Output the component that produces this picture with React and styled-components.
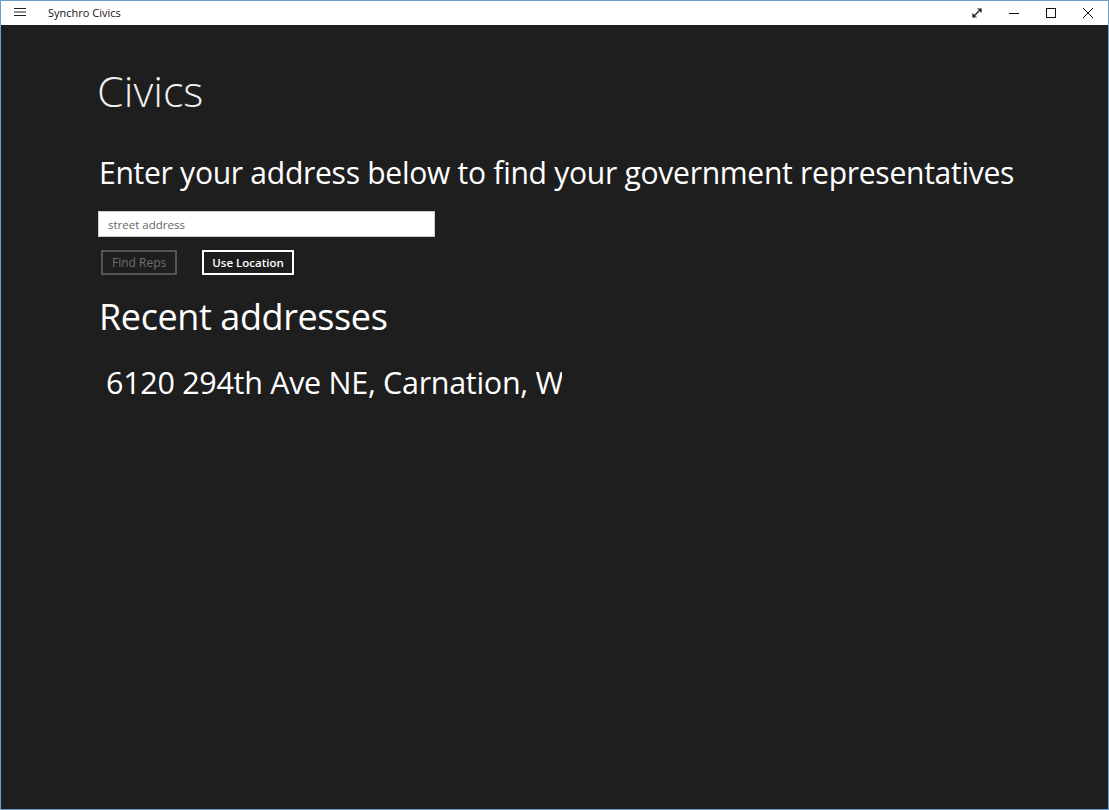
import styled, { createGlobalStyle } from 'styled-components';

const GlobalStyle = createGlobalStyle`
    html, body {
        margin: 0;
        padding: 0;
        height: 100%;
        background: #1e1e1e;
    }
    #root {
        height: 100%;
    }
`;

export default function App() {
    return (
        <Window>
            <GlobalStyle />
            <TitleBar>
                <TitleLeft>
                    <HamburgerIcon />
                    <span>Synchro Civics</span>
                </TitleLeft>
                <Controls>
                    <ControlButton>
                        <svg width="10" height="10" viewBox="0 0 10 10">
                            <path
                                d="M1 9 L9 1 M5.5 1 H9 V4.5 M1 5.5 V9 H4.5"
                                stroke="#111"
                                strokeWidth="1.2"
                                fill="none"
                            />
                        </svg>
                    </ControlButton>
                    <ControlButton>
                        <svg width="10" height="10" viewBox="0 0 10 10">
                            <path d="M0 5.5 H10" stroke="#111" strokeWidth="1" />
                        </svg>
                    </ControlButton>
                    <ControlButton>
                        <svg width="10" height="10" viewBox="0 0 10 10">
                            <rect
                                x="0.5"
                                y="0.5"
                                width="9"
                                height="9"
                                stroke="#111"
                                fill="none"
                            />
                        </svg>
                    </ControlButton>
                    <ControlButton>
                        <svg width="10" height="10" viewBox="0 0 10 10">
                            <path
                                d="M0 0 L10 10 M10 0 L0 10"
                                stroke="#111"
                                strokeWidth="1"
                            />
                        </svg>
                    </ControlButton>
                </Controls>
            </TitleBar>
            <Content>
                <PageTitle>Civics</PageTitle>
                <Prompt>
                    Enter your address below to find your government
                    representatives
                </Prompt>
                <AddressInput placeholder="street address" />
                <ButtonRow>
                    <ActionButton disabled>Find Reps</ActionButton>
                    <ActionButton>Use Location</ActionButton>
                </ButtonRow>
                <SectionTitle>Recent addresses</SectionTitle>
                <RecentList>
                    {recentAddresses.map((item) => (
                        <RecentItem key={item}>{item}</RecentItem>
                    ))}
                </RecentList>
            </Content>
        </Window>
    );
}

function HamburgerIcon() {
    return (
        <svg width="12" height="10" viewBox="0 0 12 10">
            <path d="M0 1.5 H12 M0 5 H12 M0 8.5 H12" stroke="#222" strokeWidth="1" />
        </svg>
    );
}

const recentAddresses = ['6120 294th Ave NE, Carnation, WA 98014'];

const Window = styled.div`
    box-sizing: border-box;
    height: 810px;
    width: 1109px;
    border: 1px solid #6d9fcb;
    display: flex;
    flex-direction: column;
    background: #1e1e1e;
    font-family: 'Open Sans', 'Noto Sans', sans-serif;
`;

const TitleBar = styled.div`
    height: 24px;
    flex: none;
    background: #ffffff;
    display: flex;
    align-items: center;
    justify-content: space-between;
    border-bottom: 1px solid #1e1e1e;
`;

const TitleLeft = styled.div`
    display: flex;
    align-items: center;
    font-size: 11px;
    color: #111;
    margin-top: -2px;
    svg {
        margin-left: 13px;
        margin-right: 22px;
    }
`;

const Controls = styled.div`
    display: flex;
    height: 100%;
    margin-right: 2px;
`;

const ControlButton = styled.div`
    width: 37px;
    height: 100%;
    display: flex;
    align-items: center;
    justify-content: center;
`;

const Content = styled.main`
    flex: 1;
    padding: 37px 0 0 96px;
    color: #ffffff;
    overflow: hidden;
`;

const PageTitle = styled.h1`
    margin: 0;
    font-size: 43px;
    font-weight: 300;
    line-height: 56px;
    color: #f0f0f0;
`;

const Prompt = styled.h2`
    margin: 34px 0 0 2px;
    font-size: 30.1px;
    font-weight: 400;
    line-height: 40px;
    letter-spacing: -0.3px;
`;

const AddressInput = styled.input`
    box-sizing: border-box;
    display: block;
    margin: 18px 0 0 1px;
    width: 337px;
    height: 26px;
    border: 1px solid #ccc;
    padding: 0 9px;
    font-family: inherit;
    font-size: 11.5px;
    color: #222;
    outline: none;
    &::placeholder {
        color: #666;
    }
`;

const ButtonRow = styled.div`
    display: flex;
    gap: 25px;
    margin: 13px 0 0 4px;
`;

const ActionButton = styled.button`
    box-sizing: border-box;
    height: 25px;
    padding: 0 ${(p) => (p.disabled ? 9 : 8)}px;
    background: transparent;
    font-family: inherit;
    font-size: ${(p) => (p.disabled ? 12 : 11.5)}px;
    font-weight: ${(p) => (p.disabled ? 400 : 600)};
    color: ${(p) => (p.disabled ? '#6e6e6e' : '#ffffff')};
    border: 2px solid ${(p) => (p.disabled ? '#555555' : '#ffffff')};
`;

const SectionTitle = styled.h2`
    margin: 19px 0 0 2px;
    font-size: 36px;
    font-weight: 400;
    line-height: 46px;
    letter-spacing: -0.4px;
`;

const RecentList = styled.ul`
    list-style: none;
    margin: 22px 0 0 9px;
    padding: 0;
    width: 456px;
    overflow: hidden;
`;

const RecentItem = styled.li`
    font-size: 30.5px;
    line-height: 40px;
    white-space: nowrap;
    letter-spacing: -0.3px;
`;
